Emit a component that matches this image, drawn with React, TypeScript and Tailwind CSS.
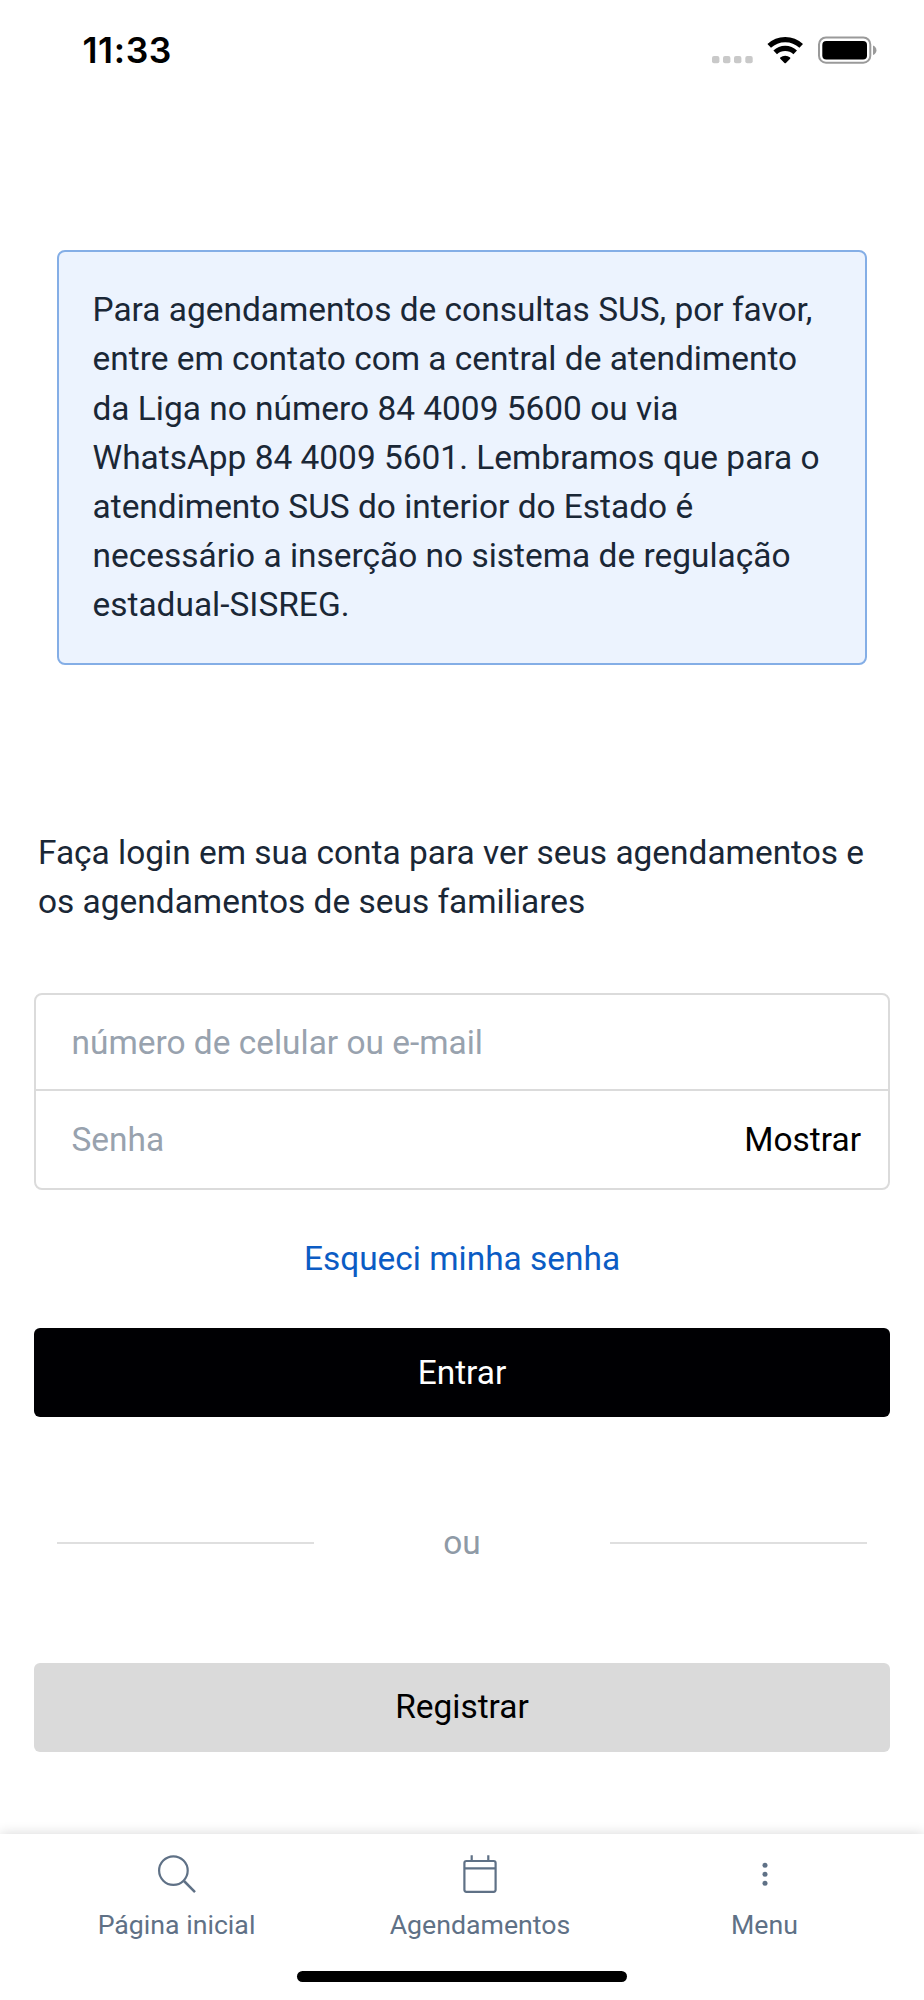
import React from "react";

function StatusBar() {
  return (
    <header className="flex h-[100px] items-center justify-between pl-[82.500px] pr-[47px]">
      <span className="pt-[2px] font-['Inter',sans-serif] text-[35.500px] font-semibold leading-[42px] tracking-[0.600px] text-black">
        11:33
      </span>
      <svg width="166" height="30" viewBox="711 35 166 30" aria-hidden="true">
        <g fill="#c9c9c9">
          <rect x="712" y="56" width="7.4" height="7.3" rx="2" />
          <rect x="723" y="56" width="7.4" height="7.3" rx="2" />
          <rect x="734" y="56" width="7.4" height="7.3" rx="2" />
          <rect x="745.3" y="56" width="7.4" height="7.3" rx="2" />
        </g>
        <g fill="none" stroke="#000" strokeWidth="5.2">
          <path d="M769.2 45.9a23.3 23.3 0 0 1 32 0" />
          <path d="M775.2 52.4a14.6 14.6 0 0 1 20 0" />
        </g>
        <path d="M780.3 57.6a7.4 7.4 0 0 1 9.8 0q.6.6 0 1.200l-4.200 4.200q-.7.600-1.400 0l-4.200-4.200q-.6-.6 0-1.200z" fill="#000" />
        <rect x="819" y="37.500" width="51.300" height="25.200" rx="7" fill="#fff" stroke="#9a9a9a" strokeWidth="2" />
        <rect x="822.300" y="41" width="44.700" height="18.500" rx="4" fill="#000" />
        <path d="M873 45.500c4.600 1.600 4.600 7.900 0 9.500z" fill="#9a9a9a" />
      </svg>
    </header>
  );
}

function SearchIcon() {
  return (
    <svg width="40" height="40" viewBox="0 0 40 40" fill="none" stroke="#5f7186" strokeWidth="2.200" aria-hidden="true">
      <circle cx="16.400" cy="16.600" r="14.300" />
      <path d="M27 27l11 11.200" strokeWidth="2.500" />
    </svg>
  );
}

function CalendarIcon() {
  return (
    <svg width="40" height="40" viewBox="0 0 40 40" fill="none" stroke="#5f7186" strokeWidth="2.200" aria-hidden="true">
      <rect x="4.400" y="7" width="31.200" height="30.800" rx="2" />
      <path d="M4.400 14.300h31.200M11.700 1.200v5.800M28.300 1.200v5.800" />
    </svg>
  );
}

function MenuIcon() {
  return (
    <svg width="40" height="40" viewBox="0 0 40 40" fill="#5f7186" aria-hidden="true">
      <circle cx="20" cy="11.200" r="2.500" />
      <circle cx="20" cy="20.200" r="2.500" />
      <circle cx="20" cy="29.200" r="2.500" />
    </svg>
  );
}

function BottomNav() {
  return (
    <nav className="relative flex h-[166px] bg-white pl-[25px] pt-5 text-[26.700px] leading-[40px] text-[#5f7186] shadow-[0_0_12px_rgba(0,0,0,0.16)]">
      <a className="flex w-[303px] flex-col items-center gap-[11px]">
        <SearchIcon />
        <span>Página inicial</span>
      </a>
      <a className="flex w-[304px] flex-col items-center gap-[11px]">
        <CalendarIcon />
        <span>Agendamentos</span>
      </a>
      <a className="flex w-[265px] flex-col items-center gap-[11px]">
        <MenuIcon />
        <span>Menu</span>
      </a>
      <div className="absolute left-[297px] top-[137px] h-[11px] w-[330px] rounded-full bg-black" />
    </nav>
  );
}

export default function App() {
  return (
    <div className="flex h-[2000px] w-[924px] flex-col overflow-hidden bg-white font-['Roboto',sans-serif] text-[33.450px] leading-[49.140px] text-[#1a2736]">
      <StatusBar />

      <main className="flex flex-1 flex-col">
        <section className="mx-[57px] mt-[150px] h-[415px] whitespace-nowrap rounded-[8px] border-2 border-[#84aee6] bg-[#ecf3fe] px-[33.500px] pt-[33.300px]">
          <p>
            Para agendamentos de consultas SUS, por favor,
            <br />
            entre em contato com a central de atendimento
            <br />
            da Liga no número 84 4009 5600 ou via
            <br />
            WhatsApp 84 4009 5601. Lembramos que para o
            <br />
            atendimento SUS do interior do Estado é
            <br />
            necessário a inserção no sistema de regulação
            <br />
            estadual-SISREG.
          </p>
        </section>

        <p className="ml-[38px] mt-[163px] whitespace-nowrap">
          Faça login em sua conta para ver seus agendamentos e
          <br />
          os agendamentos de seus familiares
        </p>

        <form className="mx-[34px] mt-[67px] flex h-[197px] shrink-0 flex-col rounded-[8px] border-2 border-[#dbdbdb] text-[#98a2ae]">
          <div className="flex h-[96px] items-center border-b-2 border-[#dbdbdb] px-[35.500px]">
            número de celular ou e-mail
          </div>
          <div className="flex flex-1 items-center justify-between pb-px pl-[35.500px] pr-[27px]">
            <span>Senha</span>
            <button type="button" className="text-black">Mostrar</button>
          </div>
        </form>

        <a className="mt-[44px] text-center text-[#0b5cc4]">Esqueci minha senha</a>

        <button className="mx-[34px] mt-[45px] h-[89px] rounded-[6px] bg-[#000003] text-white">Entrar</button>

        <div className="mx-[57px] mt-[101px] flex items-center justify-between text-[#8f9aa6]">
          <div className="h-[2.500px] w-[257px] bg-[#dfdfdf]" />
          <span>ou</span>
          <div className="h-[2.500px] w-[257px] bg-[#dfdfdf]" />
        </div>

        <button className="mx-[34px] mt-[95px] h-[89px] rounded-[6px] bg-[#dadada] text-black">Registrar</button>
      </main>

      <BottomNav />
    </div>
  );
}
